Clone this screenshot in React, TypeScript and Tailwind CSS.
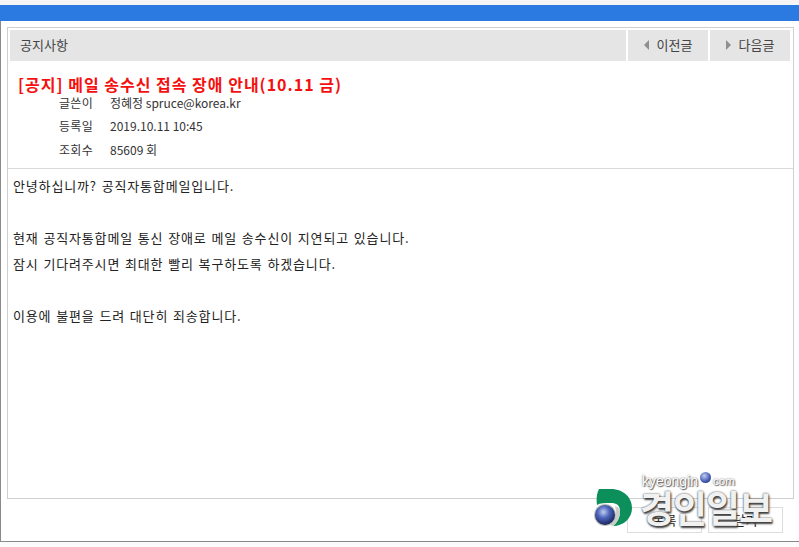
const font = { fontFamily: '"Noto Sans CJK KR", "Liberation Sans", sans-serif' };

function Logo() {
  return (
    <div className="absolute left-[593px] top-[470px] w-[190px] h-[62px]">
      <svg className="absolute left-0 top-[17px]" width="46" height="42" viewBox="0 0 46 42">
        <defs>
          <radialGradient id="ball" cx="0.42" cy="0.35" r="0.65">
            <stop offset="0" stopColor="#c3cdf0" />
            <stop offset="0.45" stopColor="#4f68bd" />
            <stop offset="1" stopColor="#1b2560" />
          </radialGradient>
        </defs>
        <path d="M6 2 H18 C31 2 39 11 39 21 C39 31 31 39 20 39 C25 35 27 29 27 24 C27 19 24 16 18 16 C12 16 7 16 4 18 C3 11 4 6 6 2 Z" fill="#0d8f5c" />
        <path d="M22 19 C25 20 27 22 27 25 C27 30 25 35 20 39 L17 38 C22 33 24 26 22 19 Z" fill="#c9cec9" />
        <circle cx="12" cy="28" r="11" fill="#b9c0b8" />
        <circle cx="12" cy="28" r="10" fill="url(#ball)" />
      </svg>
      <div className="absolute left-[49px] top-[2px] flex items-center text-[14px] leading-[18px] text-white [text-shadow:0_0_2px_#555,1px_1px_1px_#666]" style={{ fontFamily: '"Liberation Sans", sans-serif' }}>
        <span>kyeongin</span>
        <span className="w-[11px] h-[11px] mx-[2px] -mt-2 rounded-full bg-[radial-gradient(circle_at_40%_35%,#c3cdf0,#3f57b0_60%,#1b2560)]"></span>
        <span className="text-[11.5px]">com</span>
      </div>
      <div className="absolute left-[47px] top-[15px] text-[37px] leading-[44px] font-bold tracking-[-1px] text-[#f1f1f1] [text-shadow:0_0_2px_#333,1px_2px_2px_#444]" style={font}>
        경인일보
      </div>
    </div>
  );
}

export default function App() {
  return (
    <div className="relative w-[799px] h-[547px] overflow-hidden bg-[#fbfbfb] text-[#222]" style={font}>
      <div className="h-[5px] bg-[#f6f4f4]"></div>
      <div className="h-[16px] bg-[#2a7ae2]"></div>

      <div className="h-[521px] bg-white border-l border-b border-[#8a8a8a] pl-[6px] pt-[6px] pr-[5px]">
        <div className="h-[472px] border border-[#cfcfcf] pt-[2px]">
          {/* Header */}
          <div className="flex h-[31px] pl-[2px] pr-[3px] gap-[2px] text-[13px] leading-[17px] text-[#444]">
            <div className="flex-1 bg-[#e5e5e5] flex items-center pl-[10px] pb-[2px]">공지사항</div>
            <div className="w-[80px] bg-[#e5e5e5] flex items-center justify-center gap-[8px] pb-[2px]">
              <span className="w-0 h-0 border-y-[5px] border-y-transparent border-r-[5px] border-r-[#8f8f8f]"></span>
              <span>이전글</span>
            </div>
            <div className="w-[80px] bg-[#e5e5e5] flex items-center justify-center gap-[8px] pb-[2px]">
              <span className="w-0 h-0 border-y-[5px] border-y-transparent border-l-[5px] border-l-[#8f8f8f]"></span>
              <span>다음글</span>
            </div>
          </div>

          {/* Title and meta */}
          <div className="h-[108px] border-b border-[#d9d9d9] pt-[12px] pl-[10px]">
            <h1 className="text-[16px] leading-[22px] font-bold text-[#f50f0f] tracking-[1px]">
              [공지] 메일 송수신 접속 장애 안내(10.11 금)
            </h1>
            <div className="-mt-[4px] pl-[41px] text-[12px] text-[#333]">
              {[
                ['글쓴이', '정혜정 spruce@korea.kr'],
                ['등록일', '2019.10.11 10:45'],
                ['조회수', '85609 회'],
              ].map(([label, value]) => (
                <div key={label} className="flex h-[23.5px] items-center">
                  <span className="w-[51px] tracking-[0.3px]">{label}</span>
                  <span>{value}</span>
                </div>
              ))}
            </div>
          </div>

          {/* Body */}
          <div className="pt-[4px] pl-[5px] text-[13px] leading-[26px] text-[#222] tracking-[0.85px] [word-spacing:1px]">
            <p>안녕하십니까? 공직자통합메일입니다.</p>
            <p>&nbsp;</p>
            <p>현재 공직자통합메일 통신 장애로 메일 송수신이 지연되고 있습니다.</p>
            <p>잠시 기다려주시면 최대한 빨리 복구하도록 하겠습니다.</p>
            <p>&nbsp;</p>
            <p>이용에 불편을 드려 대단히 죄송합니다.</p>
          </div>
        </div>

        <div className="flex justify-end gap-[6px] pt-[8px] pr-[11px] text-[13px] text-[#222]">
          <div className="w-[75px] h-[26px] border border-[#ddd] flex items-center justify-center">목록</div>
          <div className="w-[75px] h-[26px] border border-[#ddd] flex items-center justify-center">닫기</div>
        </div>
      </div>

      <Logo />
    </div>
  );
}
